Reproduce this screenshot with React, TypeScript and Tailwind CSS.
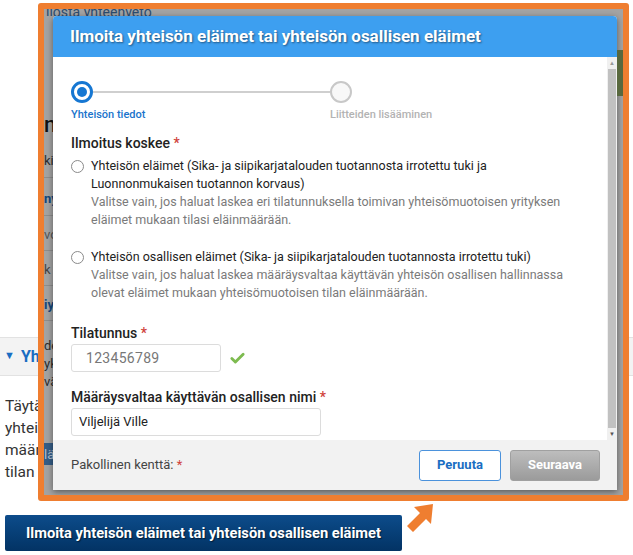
import { Check } from "lucide-react";

const font = { fontFamily: "Roboto, 'Liberation Sans', sans-serif" };

const Req = () => <span className="text-[#d0413a]"> *</span>;

const Stepper = () => (
  <div className="relative h-[44px] mt-[22px]">
    <div className="flex items-center h-[22px]">
      <div className="w-[22px] h-[22px] rounded-full border-[3px] border-[#1677d2] bg-white flex items-center justify-center">
        <div className="w-[10px] h-[10px] rounded-full bg-[#1677d2]" />
      </div>
      <div className="w-[237px] h-[2px] bg-[#cfcfcf]" />
      <div className="w-[22px] h-[22px] rounded-full border-2 border-[#c8c8c8] bg-[#f8f8f8]" />
    </div>
    <div className="flex mt-[4px] text-[11px] font-medium">
      <span className="text-[#1a74cc] w-[259px]">Yhteisön tiedot</span>
      <span className="text-[#b3b3b3]">Liitteiden lisääminen</span>
    </div>
  </div>
);

type OptionProps = { title: string[]; desc: string[] };

const RadioOption = ({ title, desc }: OptionProps) => (
  <div className="flex gap-[7px] text-[12.5px] leading-[18px]">
    <div className="w-[13px] h-[13px] mt-[3px] rounded-full border border-[#8a8a8a] bg-white shrink-0" />
    <div>
      {title.map((t) => (
        <div key={t} className="text-[#222]">
          {t}
        </div>
      ))}
      {desc.map((d) => (
        <div key={d} className="text-[#7a7a7a]">
          {d}
        </div>
      ))}
    </div>
  </div>
);

const Modal = () => (
  <div className="w-[564px] h-[474px] bg-white rounded-t-[4px] shadow-[0_2px_6px_rgba(0,0,0,0.45)] flex flex-col overflow-hidden">
    <div className="h-[41px] bg-[#3d9ff0] flex items-center pl-[17px]">
      <h2 className="text-white text-[17px] font-bold [text-shadow:1px_1px_2px_rgba(0,0,0,0.45)]">
        Ilmoita yhteisön eläimet tai yhteisön osallisen eläimet
      </h2>
    </div>
    <div className="flex flex-1 min-h-0">
      <div className="flex-1 pl-[18px] pt-[2px]">
        <Stepper />
        <div className="mt-[8px] text-[14px] font-medium text-[#222]">
          Ilmoitus koskee
          <Req />
        </div>
        <div className="mt-[3px] flex flex-col gap-[19px]">
          <RadioOption
            title={[
              "Yhteisön eläimet (Sika- ja siipikarjatalouden tuotannosta irrotettu tuki ja",
              "Luonnonmukaisen tuotannon korvaus)",
            ]}
            desc={[
              "Valitse vain, jos haluat laskea eri tilatunnuksella toimivan yhteisömuotoisen yrityksen",
              "eläimet mukaan tilasi eläinmäärään.",
            ]}
          />
          <RadioOption
            title={[
              "Yhteisön osallisen eläimet (Sika- ja siipikarjatalouden tuotannosta irrotettu tuki)",
            ]}
            desc={[
              "Valitse vain, jos haluat laskea määräysvaltaa käyttävän yhteisön osallisen hallinnassa",
              "olevat eläimet mukaan yhteisömuotoisen tilan eläinmäärään.",
            ]}
          />
        </div>
        <div className="mt-[21px] text-[14px] font-medium text-[#222]">
          Tilatunnus
          <Req />
        </div>
        <div className="flex items-center gap-[8px]">
          <div className="w-[150px] h-[28px] border border-[#dcdcdc] rounded-[3px] pl-[14px] flex items-center text-[14px] text-[#777] tracking-[0.3px]">
            123456789
          </div>
          <Check className="w-[17px] h-[17px] text-[#7dbb4f]" strokeWidth={4} />
        </div>
        <div className="mt-[15px] text-[14px] font-medium text-[#222]">
          Määräysvaltaa käyttävän osallisen nimi
          <Req />
        </div>
        <div className="w-[250px] h-[28px] border border-[#dcdcdc] rounded-[3px] pl-[7px] flex items-center text-[13px] text-[#222]">
          Viljelijä Ville
        </div>
      </div>
      <div className="w-[10px] bg-[#f0f0f0] flex flex-col items-center">
        <div className="h-[12px] text-[6px] text-[#999] leading-[12px]">▲</div>
        <div className="flex-1 w-[8px] bg-[#c1c1c1]" />
        <div className="h-[12px] text-[6px] text-[#555] leading-[12px]">▼</div>
      </div>
    </div>
    <div className="h-[50px] bg-[#f2f2f2] flex items-center pl-[18px] pr-[17px]">
      <div className="flex-1 text-[13px] text-[#444]">
        Pakollinen kenttä:
        <Req />
      </div>
      <button className="w-[82px] h-[31px] border border-[#4b92dc] rounded-[3px] bg-white text-[#1a6dc2] text-[13px] font-bold">
        Peruuta
      </button>
      <button className="ml-[9px] w-[90px] h-[31px] border border-[#a0a0a0] rounded-[3px] bg-gradient-to-b from-[#bdbdbd] to-[#9b9b9b] text-white text-[13px] font-bold">
        Seuraava
      </button>
    </div>
  </div>
);

const DimStrip = () => (
  <div className="w-[9px] flex flex-col text-[13px] leading-none overflow-hidden">
    <div className="h-[98px]" />
    <div className="h-[30px] text-[22px] text-[#111] font-medium">n</div>
    <div className="h-[34px] pt-[10px] text-[#2c2c2c] border-b border-[#8d8d8d]">ki</div>
    <div className="h-[38px] pt-[14px] text-[#14467a] font-bold border-b border-[#8d8d8d]">ny</div>
    <div className="h-[35px] pt-[12px] text-[#555] border-b border-[#8d8d8d]">vo</div>
    <div className="h-[35px] pt-[12px] text-[#444] border-b border-[#8d8d8d]">k</div>
    <div className="h-[35px] pt-[12px] text-[#14467a] font-bold border-b border-[#8d8d8d]">iy</div>
    <div className="pt-[16px] leading-[18px] text-[#2c2c2c]">
      <div>de</div>
      <div>yk</div>
      <div>vä</div>
    </div>
    <div className="mt-[52px] h-[22px] bg-[#355d86] text-[#aebfd0] pt-[5px]">lä</div>
  </div>
);

const Annotation = () => (
  <div className="absolute left-[38px] top-[3px] w-[591px] h-[498px] border-[6px] border-[#ef7e30] rounded-[3px] bg-[#a3a3a3] overflow-hidden">
    <div className="h-[7px] text-[14px] leading-[6px] text-[#2c4b6d] pl-[2px] overflow-hidden">
      llosta yhteenveto
    </div>
    <div className="flex">
      <DimStrip />
      <Modal />
      <div className="flex-1 flex flex-col">
        <div className="h-[34px]" />
        <div className="h-[46px] bg-[#58683e]" />
      </div>
    </div>
  </div>
);

const App = () => (
  <div className="relative w-[633px] h-[555px] bg-white overflow-hidden" style={font}>
    <div className="pt-[337px]">
      <div className="h-[39px] bg-[#f3f3f3] border-y border-[#e2e2e2] flex items-center pl-[4px] gap-[6px] text-[16px] font-bold text-[#1a6dc2]">
        <span className="text-[11px]">▼</span>
        <span>Yhteisön tiedot</span>
      </div>
      <div className="pl-[5px] pt-[19px] text-[15.5px] leading-[22px] text-[#333]">
        <div>Täytä tiedot</div>
        <div>yhteisön tiedot</div>
        <div>määräysvaltaa</div>
        <div>tilan eläimet</div>
      </div>
      <button className="ml-[5px] mt-[32px] w-[397px] h-[36px] rounded-[2px] bg-gradient-to-b from-[#0d4c8b] to-[#033364] text-white text-[14.7px] font-bold [text-shadow:1px_1px_1px_rgba(0,0,0,0.5)]">
        Ilmoita yhteisön eläimet tai yhteisön osallisen eläimet
      </button>
    </div>
    <Annotation />
    <svg className="absolute left-[405px] top-[503px]" width="30" height="30" viewBox="0 0 30 30">
      <polygon points="28,1 26,21 21,16 8,29 2,23 15,10 9,4" fill="#ef7e30" />
    </svg>
  </div>
);

export default App;
